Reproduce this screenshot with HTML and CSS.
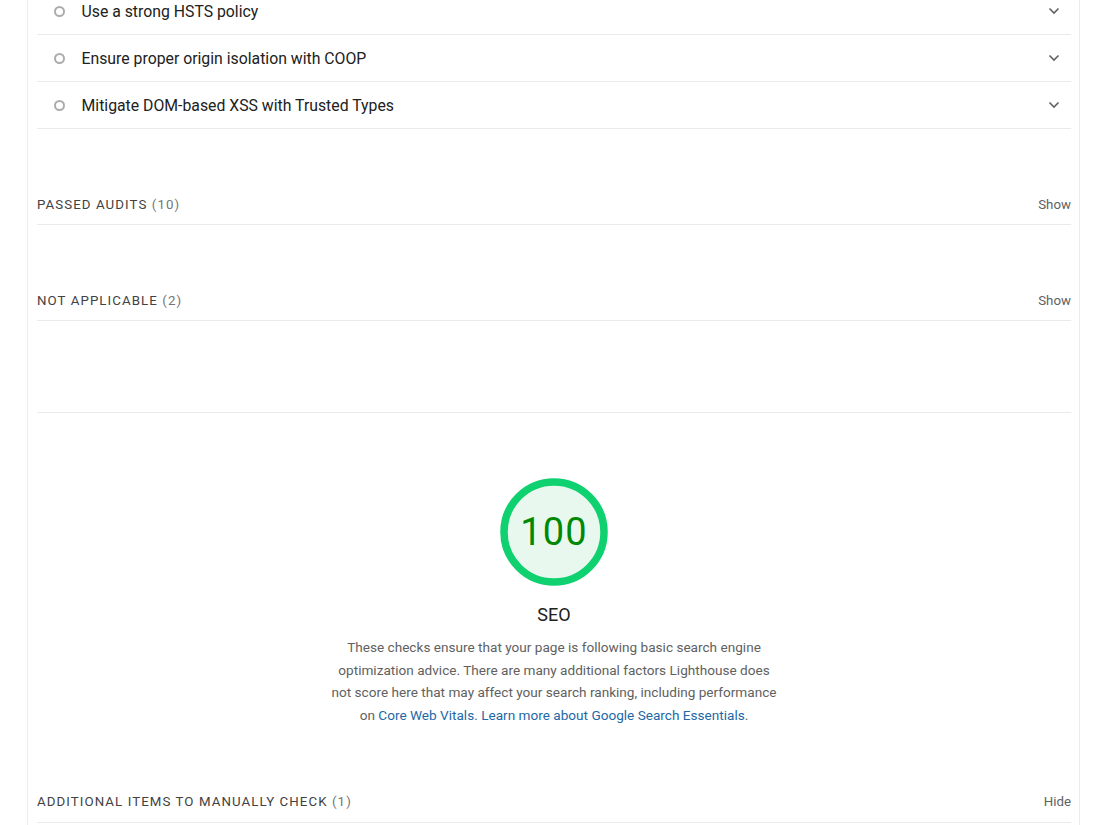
FILE: index.html
```html
<!DOCTYPE html>
<html lang="en">
<head>
<meta charset="utf-8">
<title>Lighthouse report</title>
<link rel="stylesheet" href="styles.css">
</head>
<body>
<div class="report">
  <div class="audit-list">
    <div class="audit">
      <span class="audit-icon"></span>
      <span class="audit-title">Use a strong HSTS policy</span>
      <svg class="chevron" viewBox="0 0 12 8" width="12" height="8"><path d="M1.5 1.5 L6 6 L10.5 1.5" fill="none" stroke="#616161" stroke-width="1.6"/></svg>
    </div>
    <div class="audit">
      <span class="audit-icon"></span>
      <span class="audit-title">Ensure proper origin isolation with COOP</span>
      <svg class="chevron" viewBox="0 0 12 8" width="12" height="8"><path d="M1.5 1.5 L6 6 L10.5 1.5" fill="none" stroke="#616161" stroke-width="1.6"/></svg>
    </div>
    <div class="audit">
      <span class="audit-icon"></span>
      <span class="audit-title">Mitigate DOM-based XSS with Trusted Types</span>
      <svg class="chevron" viewBox="0 0 12 8" width="12" height="8"><path d="M1.5 1.5 L6 6 L10.5 1.5" fill="none" stroke="#616161" stroke-width="1.6"/></svg>
    </div>
  </div>

  <div class="clump clump-passed">
    <div class="clump-title">Passed audits <span class="count">(10)</span></div>
    <div class="clump-toggle">Show</div>
  </div>

  <div class="clump clump-na">
    <div class="clump-title">Not applicable <span class="count">(2)</span></div>
    <div class="clump-toggle">Show</div>
  </div>

  <div class="category">
    <div class="gauge">
      <svg viewBox="0 0 108 108" width="108" height="108">
        <circle cx="54" cy="54" r="50" fill="#e9f8ef" stroke="#0fd16f" stroke-width="7.5"/>
      </svg>
      <span class="gauge-score">100</span>
    </div>
    <div class="category-title">SEO</div>
    <p class="category-desc">These checks ensure that your page is following basic search engine optimization advice. There are many additional factors Lighthouse does not score here that may affect your search ranking, including performance on <a href="#">Core Web Vitals</a>. <a href="#">Learn more about Google Search Essentials</a>.</p>
  </div>

  <div class="clump clump-manual">
    <div class="clump-title">Additional items to manually check <span class="count">(1)</span></div>
    <div class="clump-toggle">Hide</div>
  </div>
</div>
</body>
</html>
```

FILE: styles.css
```css
html, body {
  margin: 0;
  padding: 0;
  background: #ffffff;
  overflow: hidden;
}

body {
  font-family: Roboto, "Liberation Sans", sans-serif;
  color: #212121;
}

.report {
  margin-left: 27px;
  width: 1034px;
  min-height: 860px;
  border-left: 1px solid #ececec;
  border-right: 1px solid #ececec;
  padding: 0 8px 0 9px;
  box-sizing: content-box;
  margin-top: -12px;
}

.audit-list {
  display: flex;
  flex-direction: column;
}

.audit {
  display: flex;
  align-items: center;
  height: 46px;
  padding-left: 17px;
  padding-right: 11px;
  border-bottom: 1px solid #ebebeb;
}

.audit-icon {
  width: 7px;
  height: 7px;
  border: 2.5px solid #acacac;
  border-radius: 50%;
  flex: none;
}

.audit-title {
  margin-left: 16.5px;
  font-size: 15.8px;
  flex: 1;
  color: #212121;
}

.chevron {
  flex: none;
}

.clump {
  display: flex;
  align-items: center;
  justify-content: space-between;
  height: 40px;
  border-bottom: 1px solid #ebebeb;
}

.clump-passed {
  margin-top: 55px;
}

.clump-na {
  margin-top: 55px;
}

.clump-title {
  font-size: 13.3px;
  text-transform: uppercase;
  letter-spacing: 0.08em;
  color: #424242;
}

.clump-title .count {
  color: #757575;
}

.clump-toggle {
  font-size: 13.3px;
  color: #616161;
}

.category {
  margin-top: 91px;
  border-top: 1px solid #ebebeb;
  display: flex;
  flex-direction: column;
  align-items: center;
  padding-top: 65px;
  padding-bottom: 55px;
}

.gauge {
  position: relative;
  width: 108px;
  height: 108px;
}

.gauge svg {
  display: block;
}

.gauge-score {
  position: absolute;
  inset: 0;
  display: flex;
  align-items: center;
  justify-content: center;
  font-size: 38px;
  color: #008800;
  letter-spacing: 0.03em;
}

.category-title {
  margin-top: 18px;
  font-size: 18px;
  color: #212121;
}

.category-desc {
  margin: 11px 0 0;
  max-width: 446px;
  text-align: center;
  font-size: 13.6px;
  line-height: 22.7px;
  color: #616161;
}

.category-desc a {
  color: #1e68a6;
  text-decoration: none;
}
```
